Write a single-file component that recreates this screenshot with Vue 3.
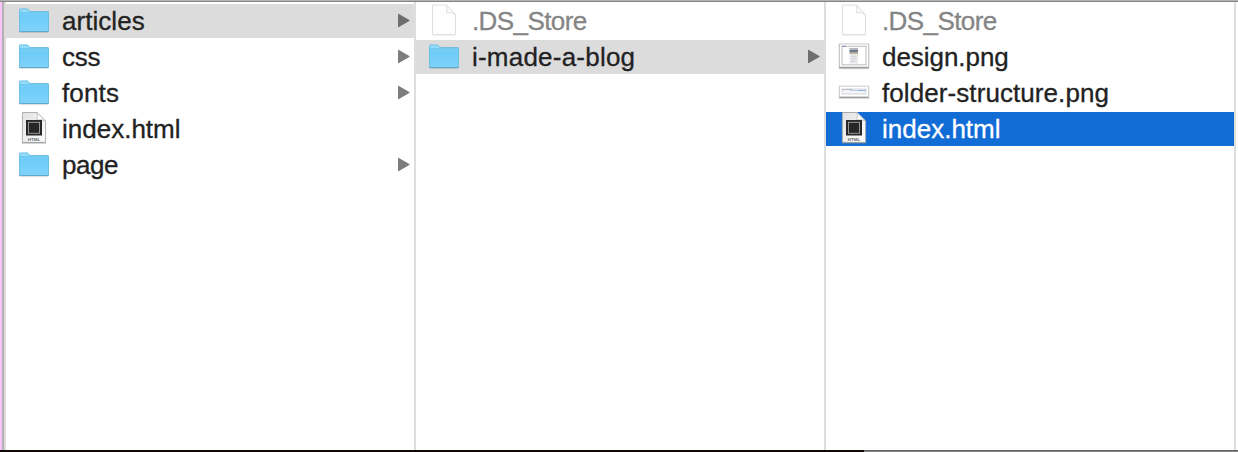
<script setup>
const columns = [
  [
    { name: 'articles', icon: 'folder', arrow: true, state: 'open', track: 0.05 },
    { name: 'css', icon: 'folder', arrow: true, track: -0.2 },
    { name: 'fonts', icon: 'folder', arrow: true, track: 0.15 },
    { name: 'index.html', icon: 'html', track: 0 },
    { name: 'page', icon: 'folder', arrow: true, track: -0.45 },
  ],
  [
    { name: '.DS_Store', icon: 'blank', state: 'hidden', track: -0.6 },
    { name: 'i-made-a-blog', icon: 'folder', arrow: true, state: 'open', track: 0.22 },
  ],
  [
    { name: '.DS_Store', icon: 'blank', state: 'hidden', track: -0.6 },
    { name: 'design.png', icon: 'design', track: -0.05 },
    { name: 'folder-structure.png', icon: 'strip', track: 0.08 },
    { name: 'index.html', icon: 'html', state: 'selected', track: 0 },
  ],
]
</script>

<template>
  <div class="window">
    <svg class="defs" width="0" height="0">
      <defs>
        <linearGradient id="folderFill" x1="0" y1="0" x2="0" y2="1">
          <stop offset="0" stop-color="#6ccbf8" />
          <stop offset="1" stop-color="#7ed2f9" />
        </linearGradient>
        <linearGradient id="paperFill" x1="0" y1="0" x2="1" y2="1">
          <stop offset="0" stop-color="#e2e2e2" />
          <stop offset="1" stop-color="#fdfdfd" />
        </linearGradient>
      </defs>
    </svg>
    <div class="topline"></div>
    <div class="body">
      <div class="edge"></div>
      <div v-for="(items, c) in columns" :key="c" class="column">
        <div v-for="item in items" :key="item.name" class="row" :class="item.state">
          <svg class="icon" width="32" height="34" viewBox="0 0 32 34">
            <template v-if="item.icon === 'folder'">
              <path d="M1.5 27.8H30.5V28.8H1.5Z" fill="#000" opacity=".16" />
              <path d="M1 6Q1 4.5 2.5 4.5H9Q10 4.5 10.6 5.4L11.4 6.4Q12 7 13 7H29.5Q31 7 31 8.5V27Q31 28 30 28H2Q1 28 1 27Z" fill="#63b4dc" />
              <path d="M1.7 6.2Q1.7 5.2 2.7 5.2H8.8Q9.6 5.2 10.1 5.8L11 7Q11.5 7.7 12.5 7.7H29.3Q30.3 7.7 30.3 8.7V10H1.7Z" fill="#92dbfa" />
              <rect x="1.6" y="9" width="28.8" height="18.2" fill="url(#folderFill)" />
              <path d="M1.5 9H30.5" stroke="#58b6e3" />
              <path d="M1.6 10H30.4" stroke="#80d6fc" />
              <path d="M1.5 27.5H30.5" stroke="#5fa9cd" />
            </template>
            <template v-else-if="item.icon === 'blank'">
              <path d="M4.5 1.1H18.3L27.5 10.5V30.4H4.5Z" fill="#fff" stroke="#dedede" />
              <path d="M4 31.2H28" stroke="#e9e9e9" />
              <path d="M18.3 1.1Q19.3 4 18.5 8.8Q24 8 27.5 10.5Z" fill="#fbfbfb" stroke="#dedede" />
            </template>
            <g v-else-if="item.icon === 'html'" transform="translate(0 -2)">
              <path d="M4.4 2.5H19L27.6 11V32.4H4.4Z" fill="url(#paperFill)" stroke="#aaa" stroke-width=".9" />
              <path d="M4 33H28" stroke="#888" stroke-width=".7" />
              <path d="M19 2.5Q20 6 18.7 10Q24 9 27.6 11Z" fill="#fafafa" stroke="#b5b5b5" stroke-width=".7" />
              <rect x="8" y="10" width="16" height="15.5" fill="#282828" />
              <rect x="10.5" y="12.3" width="11" height="11" fill="#262626" stroke="#a3a3a3" stroke-width=".9" />
              <text x="9.8" y="30.5" font-size="4.4" font-weight="bold" textLength="12.5" fill="#666">HTML</text>
            </g>
            <g v-else-if="item.icon === 'design'" transform="translate(0 -.7)">
              <rect x=".5" y="4.5" width="31" height="25.5" rx="1.2" fill="#999" opacity=".35" />
              <rect x="1.3" y="27" width="29.4" height="2" fill="#888" />
              <rect x="1.5" y="4.7" width="29" height="23" fill="#fff" stroke="#c0c0c0" stroke-width=".8" />
              <rect x="4" y="7" width="24" height="18.5" fill="#fff" stroke="#b5b5b8" stroke-width=".9" />
              <rect x="4" y="6.5" width="4" height="1" fill="#8585b5" />
              <rect x="11.5" y="8.7" width="8.5" height="15.5" fill="#e8e9ec" />
              <rect x="11.5" y="8.7" width="8.5" height="2" fill="#b4b6bc" />
              <rect x="11.5" y="10.7" width="8.5" height="2.6" fill="#687b91" />
              <rect x="11.5" y="13.3" width="8.5" height="1.2" fill="#c0a684" />
              <path d="M13 17H18M13 19.5H18M13 22H17" stroke="#c6c6c8" stroke-width=".7" />
            </g>
            <g v-else transform="translate(0 -1.5)">
              <rect x=".5" y="11.2" width="31" height="13.4" rx="1.2" fill="#bbb" opacity=".4" />
              <rect x="1.3" y="22" width="29.4" height="1.6" fill="#949494" />
              <rect x="1.5" y="11.7" width="29" height="10.6" fill="#fff" stroke="#c8c8c8" stroke-width=".8" />
              <rect x="4" y="14.5" width="24" height="5" fill="#f2f4f8" stroke="#c4c8cf" stroke-width=".7" />
              <path d="M4 15H14" stroke="#bcbcbc" />
              <path d="M12 16H20" stroke="#b8d1ee" />
              <path d="M20 16H28" stroke="#8db4e4" />
            </g>
          </svg>
          <span class="name" :style="{ letterSpacing: item.track + 'px' }">{{ item.name }}</span>
          <svg v-if="item.arrow" class="arrow" width="14" height="16" viewBox="0 0 14 16">
            <path d="M1.6 1.4L12 7.5L1.6 13.6Z" fill="currentColor" stroke="currentColor" stroke-width="1.2" stroke-linejoin="round" />
          </svg>
        </div>
      </div>
    </div>
    <div class="bottomline"><div class="dark"></div></div>
  </div>
</template>

<style>
body {
  margin: 0;
}
</style>

<style scoped>
.window {
  width: 1238px;
  height: 452px;
  display: flex;
  flex-direction: column;
  overflow: hidden;
  background: #fff;
  font-family: "Liberation Sans", Arial, sans-serif;
}
.defs {
  position: absolute;
}
.topline {
  height: 2px;
  box-sizing: border-box;
  background: #b4b4b4;
  border-bottom: 1px solid #858585;
  flex: none;
}
.body {
  flex: 1;
  display: flex;
}
.edge {
  width: 6px;
  box-sizing: border-box;
  background: #fbc2fb;
  border-right: 2px solid #dcdcdc;
  box-shadow: inset -2px 0 #b2b2b2;
}
.column {
  width: 408px;
  padding-top: 2px;
  border-right: 2px solid #dedede;
  display: flex;
  flex-direction: column;
  gap: 2px;
}
.row {
  height: 34px;
  display: flex;
  align-items: center;
  padding: 0 3px 0 12px;
  color: #222;
}
.icon {
  flex: none;
  margin-right: 12px;
}
.name {
  flex: 1;
  font-size: 26px;
  line-height: 34px;
  white-space: nowrap;
  -webkit-text-stroke: 0.3px currentColor;
}
.arrow {
  color: #7d7d7d;
}
.open {
  background: #dcdcdc;
}
.open .arrow {
  color: #6e6e6e;
}
.hidden .name {
  color: #858585;
}
.selected {
  background: #116cd6;
}
.selected .name {
  color: #fff;
}
.bottomline {
  height: 2px;
  box-sizing: border-box;
  background: #858385;
  border-top: 1px solid #656365;
  flex: none;
}
.dark {
  width: 864px;
  height: 2px;
  margin-top: -1px;
  background: #110706;
}
</style>
